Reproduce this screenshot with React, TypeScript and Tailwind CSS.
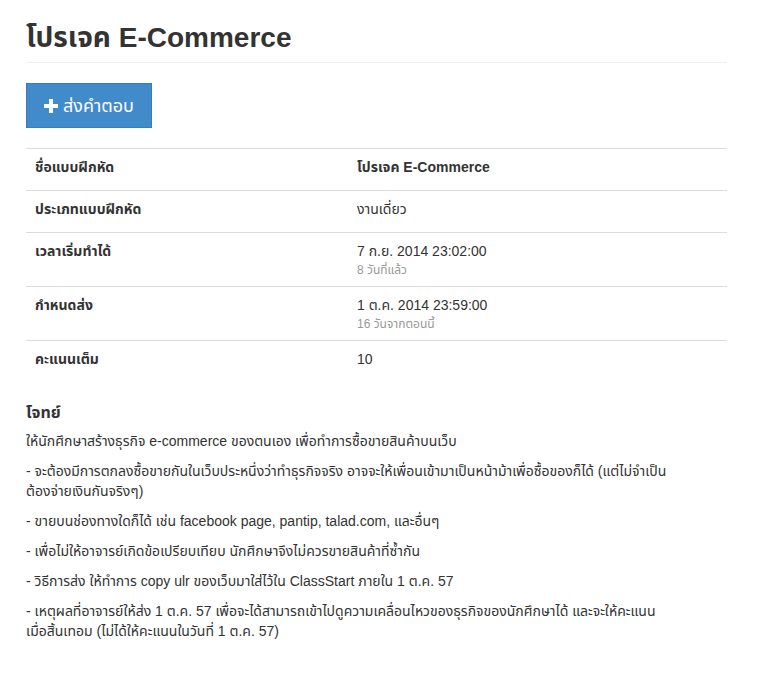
import React from 'react';

const font = { fontFamily: '"Liberation Sans", "Noto Sans", "Noto Sans Thai", sans-serif' };

type Row = { label: string; value: string; note?: string; bold?: boolean; h: string };

const rows: Row[] = [
  { label: 'ชื่อแบบฝึกหัด', value: 'โปรเจค E-Commerce', bold: true, h: 'h-[42px]' },
  { label: 'ประเภทแบบฝึกหัด', value: 'งานเดี่ยว', h: 'h-[42px]' },
  { label: 'เวลาเริ่มทำได้', value: '7 ก.ย. 2014 23:02:00', note: '8 วันที่แล้ว', h: 'h-[54px]' },
  { label: 'กำหนดส่ง', value: '1 ต.ค. 2014 23:59:00', note: '16 วันจากตอนนี้', h: 'h-[54px]' },
  { label: 'คะแนนเต็ม', value: '10', h: 'h-[40px]' },
];

const paragraphs: string[][] = [
  ['ให้นักศึกษาสร้างธุรกิจ e-commerce ของตนเอง เพื่อทำการซื้อขายสินค้าบนเว็บ'],
  [
    '- จะต้องมีการตกลงซื้อขายกันในเว็บประหนึ่งว่าทำธุรกิจจริง อาจจะให้เพื่อนเข้ามาเป็นหน้าม้าเพื่อซื้อของก็ได้ (แต่ไม่จำเป็น',
    'ต้องจ่ายเงินกันจริงๆ)',
  ],
  ['- ขายบนช่องทางใดก็ได้ เช่น facebook page, pantip, talad.com, และอื่นๆ'],
  ['- เพื่อไม่ให้อาจารย์เกิดข้อเปรียบเทียบ นักศึกษาจึงไม่ควรขายสินค้าที่ซ้ำกัน'],
  ['- วิธีการส่ง ให้ทำการ copy ulr ของเว็บมาใส่ไว้ใน ClassStart ภายใน 1 ต.ค. 57'],
  [
    '- เหตุผลที่อาจารย์ให้ส่ง 1 ต.ค. 57 เพื่อจะได้สามารถเข้าไปดูความเคลื่อนไหวของธุรกิจของนักศึกษาได้ และจะให้คะแนน',
    'เมื่อสิ้นเทอม (ไม่ได้ให้คะแนนในวันที่ 1 ต.ค. 57)',
  ],
];

export default function App() {
  return (
    <div className="min-h-screen bg-white text-[#333] text-[14px]" style={font}>
      <div className="pl-[26px] w-[727px] pt-[22px]">
        <h1 className="text-[28px] leading-[31px] font-bold pb-[9px] border-b border-[#eee]">
          โปรเจค E-Commerce
        </h1>

        <button className="mt-[20px] h-[45px] w-[126px] flex items-center justify-center gap-[5px] bg-[#428bca] border border-[#357ebd] text-white text-[18px] leading-[24px]">
          <svg width="14" height="14" viewBox="0 0 14 14">
            <path d="M5 0h4v5h5v4H9v5H5V9H0V5h5z" fill="white" />
          </svg>
          <span>ส่งคำตอบ</span>
        </button>

        <div className="mt-[20px]">
          {rows.map((r) => (
            <div key={r.label} className={`grid grid-cols-[331px_1fr] border-t border-[#ddd] overflow-hidden ${r.h}`}>
              <div className="pl-[9px] pt-[8px] font-bold leading-[20px]">{r.label}</div>
              <div className="pt-[8px] leading-[20px]">
                <div className={r.bold ? 'font-bold' : ''}>{r.value}</div>
                {r.note && <div className="text-[12px] leading-[16px] mt-[1px] text-[#999]">{r.note}</div>}
              </div>
            </div>
          ))}
        </div>

        <h4 className="mt-[23px] text-[16px] leading-[20px] font-bold mb-[8px]">โจทย์</h4>
        {paragraphs.map((lines) => (
          <p key={lines[0]} className="leading-[20px] mb-[10px]">
            {lines.map((l, i) => (
              <span key={i} className="block whitespace-nowrap">
                {l}
              </span>
            ))}
          </p>
        ))}
      </div>
    </div>
  );
}
